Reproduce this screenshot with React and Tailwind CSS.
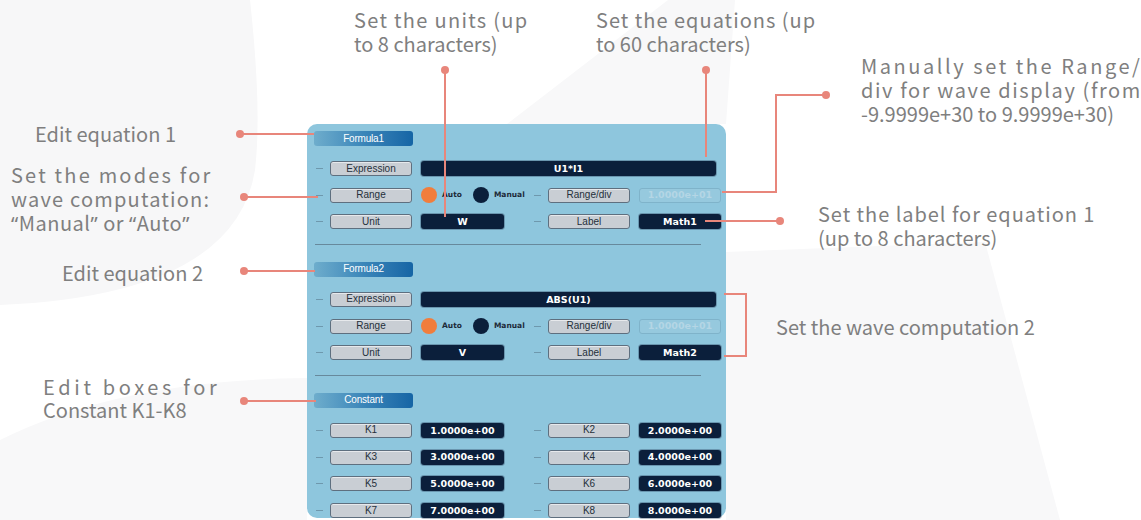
import React from "react";

const Dash = () => <div className="w-[7px] h-px bg-[#6e98ad] shrink-0" />;

const Label = ({ children }) => (
  <div className="w-[82px] h-[15px] shrink-0 rounded-[3px] border border-[#5e6f7f] bg-[#c9ced4] shadow-[inset_0_1px_0_rgba(255,255,255,0.55)] flex items-center justify-center font-['Liberation_Sans',sans-serif] text-[10px] leading-none text-[#25303b]">
    {children}
  </div>
);

const Field = ({ children, className }) => (
  <div
    className={
      "h-[15px] shrink-0 rounded-[3px] bg-[#0b1f3b] shadow-[0_0_0_1px_rgba(40,60,90,0.35)] flex items-center justify-center font-['DejaVu_Sans',sans-serif] font-bold text-[9.5px] leading-none text-white " +
      className
    }
  >
    {children}
  </div>
);

const Disabled = ({ children }) => (
  <div className="w-[82px] h-[15px] shrink-0 rounded-[3px] border border-[#7fb3ca] bg-[#96c9de] flex items-center justify-center font-['DejaVu_Sans',sans-serif] font-bold text-[9.5px] leading-none text-[#b4d6e5]">
    {children}
  </div>
);

const Header = ({ children }) => (
  <div className="w-[99px] h-[15px] ml-[-2px] rounded-[3px] bg-gradient-to-r from-[#6eadcc] via-[#3b86b9] to-[#1565a5] flex items-center justify-center font-['Liberation_Sans',sans-serif] text-[10px] tracking-[-0.2px] leading-none text-white">
    {children}
  </div>
);

const Divider = () => <div className="w-[386px] h-px ml-[-1px] bg-[#67899c]" />;

const Half = ({ children, className }) => (
  <div className={"flex items-center " + (className || "")}>{children}</div>
);

const FormulaSection = ({ title, expr, unit, label }) => (
  <div className="flex flex-col">
    <Header>{title}</Header>
    <div className="flex flex-col gap-[11.7px] mt-[15px]">
      <Half>
        <Dash />
        <div className="w-[7px]" />
        <Label>Expression</Label>
        <div className="w-[9px]" />
        <Field className="w-[295px]">{expr}</Field>
      </Half>
      <div className="flex items-center h-[15px]">
        <Half className="w-[218px]">
          <Dash />
          <div className="w-[7px]" />
          <Label>Range</Label>
          <div className="w-[9px] shrink-0" />
          <div className="w-[16px] h-[16px] rounded-full bg-[#f17d3c] shrink-0" />
          <span className="ml-[5px] font-['DejaVu_Sans',sans-serif] font-bold text-[7.5px] text-[#1d2a38] leading-none">Auto</span>
          <div className="ml-[11px] w-[16px] h-[16px] rounded-full bg-[#0b1f3b] shrink-0" />
          <span className="ml-[5px] font-['DejaVu_Sans',sans-serif] font-bold text-[7.5px] text-[#1d2a38] leading-none">Manual</span>
        </Half>
        <Half>
          <Dash />
          <div className="w-[7px]" />
          <Label>Range/div</Label>
          <div className="w-[9px]" />
          <Disabled>1.0000e+01</Disabled>
        </Half>
      </div>
      <div className="flex items-center h-[15px]">
        <Half className="w-[218px]">
          <Dash />
          <div className="w-[7px]" />
          <Label>Unit</Label>
          <div className="w-[9px]" />
          <Field className="w-[83px]">{unit}</Field>
        </Half>
        <Half>
          <Dash />
          <div className="w-[7px]" />
          <Label>Label</Label>
          <div className="w-[9px]" />
          <Field className="w-[82px]">{label}</Field>
        </Half>
      </div>
    </div>
    <div className="mt-[14.6px]">
      <Divider />
    </div>
    <div className="h-[17px]" />
  </div>
);

const KRow = ({ a, av, b, bv }) => (
  <div className="flex items-center h-[15px]">
    <Half className="w-[218px]">
      <Dash />
      <div className="w-[7px]" />
      <Label>{a}</Label>
      <div className="w-[9px]" />
      <Field className="w-[83px]">{av}</Field>
    </Half>
    <Half>
      <Dash />
      <div className="w-[7px]" />
      <Label>{b}</Label>
      <div className="w-[9px]" />
      <Field className="w-[82px]">{bv}</Field>
    </Half>
  </div>
);

const Panel = () => (
  <div className="col-start-2 row-start-2 h-[394px] rounded-[10px] bg-[#8ec6dd] pl-[9px] pt-[7px] flex flex-col">
    <FormulaSection title="Formula1" expr="U1*I1" unit="W" label="Math1" />
    <FormulaSection title="Formula2" expr="ABS(U1)" unit="V" label="Math2" />
    <Header>Constant</Header>
    <div className="flex flex-col gap-[11.7px] mt-[15.3px]">
      <KRow a="K1" av="1.0000e+00" b="K2" bv="2.0000e+00" />
      <KRow a="K3" av="3.0000e+00" b="K4" bv="4.0000e+00" />
      <KRow a="K5" av="5.0000e+00" b="K6" bv="6.0000e+00" />
      <KRow a="K7" av="7.0000e+00" b="K8" bv="8.0000e+00" />
    </div>
  </div>
);

const Background = () => (
  <svg className="absolute inset-0" width="1141" height="520" viewBox="0 0 1141 520">
    <path d="M0,0 H250 Q262,110 255,170 Q235,295 0,305 Z" fill="#f7f7f8" />
    <path d="M0,440 Q120,380 307,378 V520 H0 Z" fill="#f8f8f9" />
    <path d="M507,124 L668,0 L735,0 L726,124 Z" fill="#f8f8f9" />
    <path d="M726,252 L985,242 L1060,520 L726,520 Z" fill="#f8f8f9" />
  </svg>
);

const Leaders = () => (
  <svg className="absolute inset-0 pointer-events-none" width="1141" height="520" viewBox="0 0 1141 520">
    <g stroke="#e8867b" strokeWidth="2" fill="none">
      <line x1="445" y1="70" x2="445" y2="217" />
      <line x1="706" y1="70" x2="706" y2="157" />
      <polyline points="826,95 776,95 776,192 722,192" />
      <line x1="780" y1="221" x2="705" y2="221" />
      <polyline points="724,294 746,294 746,356 724,356" />
      <line x1="240" y1="134" x2="314" y2="134" />
      <line x1="244" y1="197" x2="318" y2="197" />
      <line x1="244" y1="271" x2="315" y2="271" />
      <line x1="244" y1="401" x2="316" y2="401" />
    </g>
    <g fill="#e8867b">
      <circle cx="445" cy="70" r="4" />
      <circle cx="706" cy="70" r="4" />
      <circle cx="826" cy="95" r="4" />
      <circle cx="780" cy="221" r="4" />
      <circle cx="240" cy="134" r="4" />
      <circle cx="244" cy="197" r="4" />
      <circle cx="244" cy="271" r="4" />
      <circle cx="244" cy="401" r="4" />
    </g>
  </svg>
);

const Q = ({ children }) => <span className="font-['Noto_Sans',sans-serif]">{children}</span>;

export default function App() {
  return (
    <div className="relative w-[1141px] h-[520px] overflow-hidden bg-white">
      <Background />
      <div className="relative grid grid-cols-[307px_419px_415px] grid-rows-[124px_396px] font-['Noto_Sans_CJK_SC',sans-serif] text-[20px] text-[#7f7f7f] whitespace-nowrap">
        <div className="col-start-1 row-start-1 row-span-2 flex flex-col items-start leading-[24px]">
          <p className="mt-[122px] ml-[35px]">Edit equation 1</p>
          <p className="mt-[17px] ml-[11px]">
            <span className="block tracking-[2.2px]">Set the modes for</span>
            <span className="block tracking-[1.2px]">wave computation:</span>
            <span className="block tracking-[0.5px]">
              <Q>“</Q>Manual<Q>”</Q> or <Q>“</Q>Auto<Q>”</Q>
            </span>
          </p>
          <p className="mt-[25px] ml-[62px]">Edit equation 2</p>
          <p className="mt-[90px] ml-[43px] leading-[23px]">
            <span className="block tracking-[3.65px]">Edit boxes for</span>
            <span className="block">Constant K1-K8</span>
          </p>
        </div>
        <div className="col-start-2 row-start-1 flex items-start pt-[8px] pl-[47px] leading-[24px]">
          <p className="w-[242px] shrink-0">
            <span className="block tracking-[1.3px]">Set the units (up</span>
            <span className="block">to 8 characters)</span>
          </p>
          <p>
            <span className="block tracking-[1px]">Set the equations (up</span>
            <span className="block">to 60 characters)</span>
          </p>
        </div>
        <div className="col-start-3 row-start-1 row-span-2 flex flex-col items-start leading-[24px]">
          <p className="mt-[54px] ml-[135px]">
            <span className="block tracking-[2.55px]">Manually set the Range/</span>
            <span className="block tracking-[1.6px]">div for wave display (from</span>
            <span className="block">-9.9999e+30 to 9.9999e+30)</span>
          </p>
          <p className="mt-[76px] ml-[92px]">
            <span className="block tracking-[0.95px]">Set the label for equation 1</span>
            <span className="block">(up to 8 characters)</span>
          </p>
          <p className="mt-[65px] ml-[50px]">Set the wave computation 2</p>
        </div>
        <Panel />
      </div>
      <Leaders />
    </div>
  );
}
